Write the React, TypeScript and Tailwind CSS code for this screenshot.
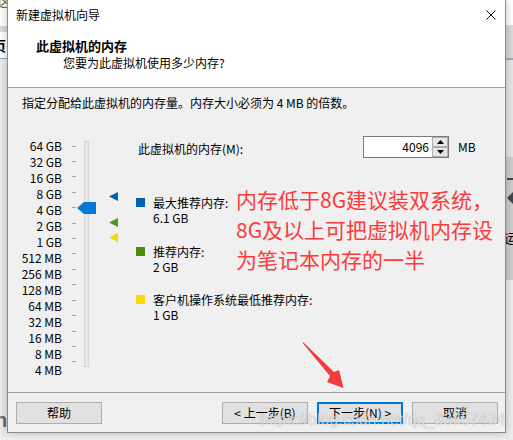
const sizes = [
  "64 GB",
  "32 GB",
  "16 GB",
  "8 GB",
  "4 GB",
  "2 GB",
  "1 GB",
  "512 MB",
  "256 MB",
  "128 MB",
  "64 MB",
  "32 MB",
  "16 MB",
  "8 MB",
  "4 MB",
];

const Marker = ({ color, top }: { color: string; top: string }) => (
  <svg width="9" height="9" viewBox="0 0 9 9" className={`absolute left-[101px] ${top}`}>
    <polygon points="0,4.5 9,0 9,9" fill={color} />
  </svg>
);

const Legend = ({ color, label, value, className }: { color: string; label: string; value: string; className: string }) => (
  <div className={`flex items-start ${className}`}>
    <div className="w-[9px] h-[9px] mt-[3px]" style={{ backgroundColor: color }} />
    <div className="ml-[8px] leading-[15px]">
      <div>{label}</div>
      <div>{value}</div>
    </div>
  </div>
);

const Btn = ({ children, active }: { children: React.ReactNode; active?: boolean }) => (
  <div
    className={`w-[86px] h-[22px] flex items-center justify-center bg-[#e1e1e1] leading-[16px] ${
      active ? "border-2 border-[#0078d7]" : "border border-[#adadad]"
    }`}
  >
    {children}
  </div>
);

const App = () => {
  return (
    <div className="relative w-[513px] h-[440px] overflow-hidden bg-[#f0f0f0] font-['Noto_Sans_CJK_SC',sans-serif] text-[12px] text-black">
      {/* app behind the wizard, left edge */}
      <div className="absolute left-0 top-0 w-[7px] h-full flex flex-col overflow-hidden">
        <div className="h-[26px] bg-white overflow-hidden">
          <div className="-mt-[7px] -ml-[3px] text-[13px] leading-[16px] text-[#8a6a1a]">这</div>
        </div>
        <div className="h-[6px] bg-[#d9d9d9]" />
        <div className="h-[26px] bg-white flex items-center overflow-hidden">
          <span className="-ml-[8px] text-[14px] font-bold leading-[16px]">页</span>
        </div>
        <div className="h-px bg-[#7fa7c9]" />
        <div className="flex-1 bg-[#ececec] flex flex-col justify-end pb-[10px]">
          <span className="-ml-[5px] text-[20px] font-bold leading-[20px] text-[#6a6a6a] font-['Liberation_Sans',sans-serif]">n</span>
        </div>
      </div>

      {/* app behind the wizard, right edge */}
      <div className="absolute right-0 top-0 w-[8px] h-full flex flex-col overflow-hidden">
        <div className="h-[25px] bg-white" />
        <div className="h-[33px] bg-[#dadada]" />
        <div className="h-[2px] bg-[#8fb0cc]" />
        <div className="h-[97px] bg-[#e6e6e6]" />
        <div className="h-[123px] bg-[#cdcdcd] flex flex-col items-start pl-[2px]">
          <div className="mt-[21px] w-[6px] h-[2px] bg-[#3c4650]" />
          <svg width="8" height="12" viewBox="0 0 8 12" className="mt-[12px]">
            <polygon points="0,6 6,0 8,0 8,12 6,12" fill="#3c4650" />
          </svg>
          <span className="mt-[26px] -ml-[3px] text-[13px] leading-[16px]">运</span>
        </div>
        <div className="flex-1 bg-[#ededed]" />
      </div>

      {/* wizard dialog */}
      <div className="absolute left-[7px] top-0 w-[499px] h-[433px] flex flex-col bg-[#f0f0f0] border-x border-b border-[#8c8c8c] shadow-[0_0_8px_rgba(0,0,0,0.25)]">
        <div className="h-[88px] bg-white border-b border-[#a0a0a0] flex flex-col">
          <div className="h-[30px] flex items-center justify-between pl-[8px] pr-[9px] leading-[16px]">
            <span>新建虚拟机向导</span>
            <svg width="10" height="10" viewBox="0 0 10 10">
              <path d="M0.5 0.5 L9.5 9.5 M9.5 0.5 L0.5 9.5" stroke="#000" strokeWidth="1" />
            </svg>
          </div>
          <div className="pl-[28px] mt-[8px] text-[13px] font-bold leading-[16px]">此虚拟机的内存</div>
          <div className="pl-[55px] mt-[1px] leading-[16px]">您要为此虚拟机使用多少内存?</div>
        </div>

        <div className="h-[304px] flex flex-col">
          <div className="pl-[14px] pt-[7px] leading-[16px]">指定分配给此虚拟机的内存量。内存大小必须为 4 MB 的倍数。</div>

          <div className="flex mt-[25px]">
            <div className="relative w-[128px] h-[232px] mt-[2px] flex">
              <div className="w-[54px] h-full flex flex-col justify-between items-end">
                {sizes.map((s) => (
                  <div key={s} className="h-[16px] leading-[16px] whitespace-nowrap">
                    {s}
                  </div>
                ))}
              </div>
              <div className="ml-[10px] w-[4px] h-full py-[7.5px] flex flex-col justify-between">
                {sizes.map((s) => (
                  <div key={s} className="h-px bg-[#a0a0a0]" />
                ))}
              </div>
              <div className="ml-[8px] mt-[3px] w-[5px] h-[226px] bg-[#e7e7e7] border border-[#d6d6d6]" />
              <svg width="19" height="12" viewBox="0 0 19 12" className="absolute left-[69px] top-[64px]">
                <polygon points="0,6 7,0 19,0 19,12 7,12" fill="#0078d7" />
              </svg>
              <Marker color="#0063b1" top="top-[54px]" />
              <Marker color="#4b9a17" top="top-[80px]" />
              <Marker color="#f8d800" top="top-[95px]" />
            </div>

            <div className="flex flex-col">
              <div className="flex items-center h-[22px]">
                <div className="w-[227px] pl-[2px] mt-[4px] leading-[16px]">此虚拟机的内存(M):</div>
                <div className="w-[86px] h-[22px] border border-[#7a7a7a] bg-white flex">
                  <div className="flex-1 text-right pr-[3px] leading-[20px]">4096</div>
                  <div className="w-[16px] flex flex-col">
                    <div className="h-[10px] bg-[#e6e6e6] border border-[#adadad] flex items-center justify-center">
                      <svg width="7" height="4" viewBox="0 0 7 4">
                        <polygon points="0,4 3.5,0 7,4" fill="#000" />
                      </svg>
                    </div>
                    <div className="h-[10px] bg-[#e6e6e6] border border-[#adadad] flex items-center justify-center">
                      <svg width="7" height="4" viewBox="0 0 7 4">
                        <polygon points="0,0 7,0 3.5,4" fill="#000" />
                      </svg>
                    </div>
                  </div>
                </div>
                <div className="ml-[9px] leading-[16px]">MB</div>
              </div>

              <Legend color="#0063b1" label="最大推荐内存:" value="6.1 GB" className="mt-[37px]" />
              <Legend color="#4a8c0e" label="推荐内存:" value="2 GB" className="mt-[19px]" />
              <Legend color="#fcd800" label="客户机操作系统最低推荐内存:" value="1 GB" className="mt-[18px]" />
            </div>
          </div>
        </div>

        <div className="h-[40px] border-t border-[#a0a0a0] pt-[9px] pl-[8px] pr-[7px] flex items-start">
          <Btn>帮助</Btn>
          <div className="ml-auto flex gap-[9px]">
            <Btn>&lt; 上一步(B)</Btn>
            <Btn active>下一步(N) &gt;</Btn>
            <Btn>取消</Btn>
          </div>
        </div>
      </div>

      {/* red annotation over the dialog */}
      <div className="absolute left-[236px] top-[184px] text-[21px] leading-[30px] text-[#fb3c3c] whitespace-nowrap">
        <div>内存低于8G建议装双系统，</div>
        <div>8G及以上可把虚拟机内存设</div>
        <div>为笔记本内存的一半</div>
      </div>
      <svg width="513" height="440" className="absolute left-0 top-0 pointer-events-none">
        <polygon points="303,342 334,372 339,370 343.5,388 327,382 330,376 303,343.5" fill="#f23b3b" />
      </svg>

      {/* blog watermark */}
      <div className="absolute left-[260px] top-[410px] text-[16px] leading-[20px] font-['Liberation_Sans',sans-serif] text-white/70 [text-shadow:0_0_1px_rgba(0,0,0,0.35)] whitespace-nowrap">
        https://blog.csdn.net/qq_33657434
      </div>
    </div>
  );
};

export default App;
